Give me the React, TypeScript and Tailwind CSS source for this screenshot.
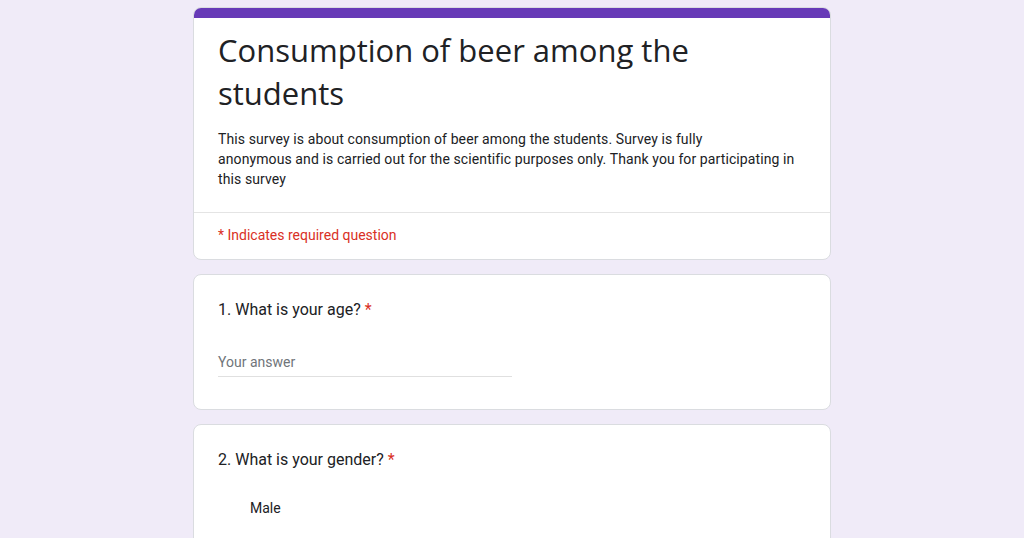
export default function App() {
  return (
    <div className="min-h-screen bg-[#f0ebf8] pt-[7px]" style={{ fontFamily: 'Roboto, "Liberation Sans", sans-serif' }}>
      <div className="mx-auto flex w-[638px] flex-col gap-[14px]">
        {/* Header card */}
        <div className="overflow-hidden rounded-lg border border-[#dadce0] bg-white">
          <div className="h-[10px] bg-[#673ab7]" />
          <div className="border-b border-[#e4e4e4] px-[24px] pb-[23px] pt-[11px]">
            <h1 className="text-[31px] leading-[43px] text-[#202124]" style={{ fontFamily: '"Open Sans", Roboto, sans-serif' }}>
              Consumption of beer among the students
            </h1>
            <p className="mt-[14px] text-[14px] leading-[20px] tracking-[0.1px] text-[#202124]">
              This survey is about consumption of beer among the students. Survey is fully
              <br />
              anonymous and is carried out for the scientific purposes only. Thank you for participating in
              <br />
              this survey
            </p>
          </div>
          <div className="px-[24px] pb-[14px] pt-[12px] text-[14px] leading-[20px] text-[#d93025]">
            * Indicates required question
          </div>
        </div>

        {/* Question 1 */}
        <div className="rounded-lg border border-[#dadce0] bg-white px-[24px] pb-[32px] pt-[23px]">
          <div className="text-[16px] leading-[24px] text-[#202124]">
            1. What is your age? <span className="text-[#d93025]">*</span>
          </div>
          <div className="mt-[30px] w-[294px] border-b border-[#e0e0e0] pb-[4px] text-[14px] leading-[20px] text-[#70757a]">
            Your answer
          </div>
        </div>

        {/* Question 2 */}
        <div className="rounded-lg border border-[#dadce0] bg-white px-[24px] pb-[40px] pt-[23px]">
          <div className="text-[16px] leading-[24px] text-[#202124]">
            2. What is your gender? <span className="text-[#d93025]">*</span>
          </div>
          <div className="mt-[24px] pl-[32px] text-[14px] leading-[24px] text-[#202124]">Male</div>
        </div>
      </div>
    </div>
  )
}
